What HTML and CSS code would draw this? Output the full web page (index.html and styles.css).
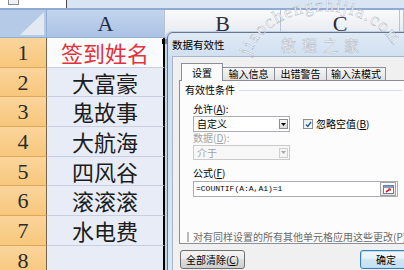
FILE: index.html
```html
<!DOCTYPE html>
<html lang="zh-CN">
<head>
    <meta charset="UTF-8">
    <meta name="viewport" content="width=device-width, initial-scale=1.0">
    <title>数据有效性</title>
    <link rel="stylesheet" href="styles.css">
</head>
<body>

<div class="screen">
    <div class="topbar">
        <div class="namebox"><span class="nb-icon"></span></div>
    </div>

    <div class="sheet">
        <div class="corner"><span class="tri"></span></div>
        <div class="colhead sel">A</div>
        <div class="colhead">B</div>
        <div class="colhead">C</div>
        <div class="colhead"></div>

        <div class="rowhead">1</div><div class="cell a first red">签到姓名</div><div class="cell"></div><div class="cell"></div><div class="cell"></div>
        <div class="rowhead">2</div><div class="cell a">大富豪</div><div class="cell"></div><div class="cell"></div><div class="cell"></div>
        <div class="rowhead">3</div><div class="cell a">鬼故事</div><div class="cell"></div><div class="cell"></div><div class="cell"></div>
        <div class="rowhead">4</div><div class="cell a">大航海</div><div class="cell"></div><div class="cell"></div><div class="cell"></div>
        <div class="rowhead">5</div><div class="cell a">四风谷</div><div class="cell"></div><div class="cell"></div><div class="cell"></div>
        <div class="rowhead">6</div><div class="cell a">滚滚滚</div><div class="cell"></div><div class="cell"></div><div class="cell"></div>
        <div class="rowhead">7</div><div class="cell a">水电费</div><div class="cell"></div><div class="cell"></div><div class="cell"></div>
        <div class="rowhead">8</div><div class="cell a"></div><div class="cell"></div><div class="cell"></div><div class="cell"></div>
    </div>

    <div class="dialog">
        <div class="titlebar">数据有效性</div>
        <div class="client">
            <div class="tabs">
                <div class="tab active">设置</div>
                <div class="tab w1">输入信息</div>
                <div class="tab w2">出错警告</div>
                <div class="tab w3">输入法模式</div>
            </div>
            <div class="panel">
                <div class="group-title">有效性条件</div>
                <div class="fields">
                    <div class="lbl">允许(<u>A</u>):</div>
                    <div class="row">
                        <div class="select">
                            <span class="val">自定义</span>
                            <span class="arrow"><svg width="5" height="3" viewBox="0 0 5 3"><path d="M0 0h5L2.5 3z" fill="#000"/></svg></span>
                        </div>
                        <span class="check on"><svg width="7" height="7" viewBox="0 0 7 7"><path d="M1 3.5l1.8 2L6 1" fill="none" stroke="#2c5aa0" stroke-width="1.4"/></svg></span>
                        <span class="check-lbl">忽略空值(<u>B</u>)</span>
                    </div>
                    <div class="lbl dis">数据(<u>D</u>):</div>
                    <div class="select dis">
                        <span class="val">介于</span>
                        <span class="arrow"><svg width="5" height="3" viewBox="0 0 5 3"><path d="M0 0h5L2.5 3z" fill="#a8a8a8"/></svg></span>
                    </div>
                    <div class="lbl">公式(<u>F</u>)</div>
                    <div class="formula">
                        <span class="ftext">=COUNTIF(A:A,A1)=1</span>
                        <span class="refbtn">
                            <svg width="11" height="9" viewBox="0 0 11 9">
                                <rect x="0.5" y="0.5" width="10" height="8" fill="#fff" stroke="#6d7f99"/>
                                <rect x="1" y="1" width="9" height="2" fill="#7f9cc8"/>
                                <path d="M3 7l4-3" stroke="#d2232a" stroke-width="1.6"/>
                                <path d="M5 3.5h2.8v2.6z" fill="#d2232a"/>
                            </svg>
                        </span>
                    </div>
                </div>
                <div class="apply">
                    <span class="check"></span>
                    <span class="apply-lbl">对有同样设置的所有其他单元格应用这些更改(P)</span>
                </div>
            </div>
            <div class="buttons">
                <div class="btn clear">全部清除(<u>C</u>)</div>
                <div class="btn ok">确定</div>
            </div>
        </div>
    </div>

    <svg class="watermark" width="404" height="60" viewBox="0 0 404 60">
        <defs>
            <path id="arc" d="M250 56 A76 58 0 0 1 398 56"/>
        </defs>
        <text class="wm-latin"><textPath href="#arc">jiaochengzhijia.com</textPath></text>
        <text class="wm-cjk" x="281" y="51">教程之家</text>
    </svg>
</div>

</body>
</html>
```

FILE: styles.css
```css
body {
    margin: 0;
    font-family: "Noto Sans CJK SC", sans-serif;
    background-color: #fff;
}

.screen {
    position: relative;
    width: 404px;
    height: 270px;
    overflow: hidden;
}

/* ---- excel top strip ---- */
.topbar {
    height: 8px;
    background-color: #d9e5f3;
    border-bottom: 2px solid #8faad4;
    display: flex;
}

.namebox {
    width: 66px;
    background-color: #fff;
    border-right: 1px solid #4b4b4b;
}

.nb-icon {
    display: block;
    width: 9px;
    height: 4px;
    margin-left: 8px;
    border: 1px solid #8b8b8b;
    border-top: none;
    background-color: #eef2f7;
}

/* ---- sheet grid ---- */
.sheet {
    display: grid;
    grid-template-columns: 47px 118px 116px 119px 1fr;
    grid-template-rows: 28px repeat(7, 29.7px) 1fr;
    height: 260px;
}

.corner {
    background-color: #b5cae6;
    border-right: 1px solid #93aed0;
    border-bottom: 1px solid #93aed0;
    display: flex;
    align-items: flex-end;
    justify-content: flex-end;
    padding: 0 2px 2px 0;
}

.tri {
    width: 24px;
    height: 23px;
    background-color: #e3e9f1;
    clip-path: polygon(100% 0, 100% 100%, 0 100%);
}

.colhead {
    font-family: "Liberation Serif", serif;
    font-size: 22px;
    line-height: 28px;
    text-align: center;
    color: #2a2f3a;
    background: linear-gradient(#f9fafc, #e4e8ee);
    border-right: 1px solid #b7c3d3;
    border-bottom: 1px solid #93aed0;
}

.colhead.sel {
    background: linear-gradient(#c3d5ed, #aac2e4);
    color: #1e2c44;
}

.rowhead {
    font-family: "Liberation Serif", serif;
    font-size: 22px;
    line-height: 29px;
    text-align: center;
    color: #2b2b2b;
    background: linear-gradient(#fbd59c, #f7c77c);
    border-right: 1px solid #7a6548;
    border-bottom: 1px solid #dfa95c;
}

.cell {
    background-color: #fff;
    border-right: 1px solid #d4dae5;
    border-bottom: 1px solid #d4dae5;
}

.cell.a {
    position: relative;
    font-size: 22px;
    line-height: 28px;
    text-align: center;
    color: #1c1c1c;
    background-color: #e7ecf6;
    border-right: 2px solid #000;
    border-bottom: 1px solid #c8d0df;
}

.cell.first {
    background-color: #fafbfd;
}

.cell.first::after {
    content: "";
    position: absolute;
    right: -4px;
    top: 1px;
    width: 5px;
    height: 5px;
    background-color: #000;
}

.cell.red {
    color: #e2323a;
}

/* ---- dialog ---- */
.dialog {
    position: absolute;
    left: 167px;
    top: 32px;
    width: 250px;
    height: 250px;
    border: 1px solid #67768a;
    border-radius: 6px 6px 0 0;
    background: linear-gradient(#dfeaf6, #cddcee 30px, #dce7f3);
    box-shadow: -1px 0 0 1px rgba(170, 198, 232, 0.7);
    font-size: 10px;
    color: #000;
}

.titlebar {
    height: 23px;
    line-height: 23px;
    padding-left: 4px;
    font-size: 10.5px;
}

.client {
    margin-left: 4px;
    height: 230px;
    background-color: #f0f0f0;
    border-top: 1px solid #a7b6ca;
    border-left: 1px solid #a7b6ca;
    padding: 6px 0 0 6px;
}

.tabs {
    display: flex;
    align-items: flex-end;
    height: 17px;
    margin-left: 2px;
}

.tab {
    height: 12px;
    line-height: 12px;
    text-align: center;
    border: 1px solid #8b8e96;
    border-bottom: none;
    background: linear-gradient(#f6f6f6, #e2e2e2);
    margin-left: -1px;
}

.tab.active {
    position: relative;
    z-index: 1;
    width: 40px;
    height: 17px;
    line-height: 17px;
    margin-bottom: -1px;
    margin-left: 0;
    background: #fcfcfc;
}

.tab.w1 { width: 51px; }
.tab.w2 { width: 51px; }
.tab.w3 { width: 58px; }

.panel {
    width: 220px;
    height: 159px;
    border: 1px solid #8b8e96;
    background-color: #fcfcfc;
    padding: 3px 0 0 5px;
}

.group-title {
    display: flex;
    align-items: center;
    height: 12px;
    line-height: 12px;
}

.group-title::after {
    content: "";
    flex: 1;
    margin: 0 3px 0 4px;
    border-top: 1px solid #d5dfe5;
}

.fields {
    padding-left: 8px;
}

.lbl {
    height: 13px;
    line-height: 13px;
    margin-top: 6px;
}

.lbl.dis {
    margin-top: -1px;
    color: #a2a2a2;
}

.row {
    display: flex;
    align-items: center;
    margin-top: 1px;
}

.select {
    width: 92px;
    height: 14px;
    border: 1px solid #abadb3;
    background-color: #fff;
    display: flex;
    align-items: center;
    padding-left: 3px;
}

.select .val {
    flex: 1;
    line-height: 14px;
}

.select .arrow {
    width: 7px;
    height: 8px;
    margin-right: 1px;
    border: 1px solid #8d8d8d;
    background: linear-gradient(#fafafa, #dcdcdc);
    display: flex;
    align-items: center;
    justify-content: center;
}

.select.dis {
    height: 13px;
    margin-top: 1px;
    color: #a2a2a2;
    border-color: #cacaca;
    background-color: #f7f7f7;
}

.select.dis .arrow {
    border-color: #cfcfcf;
    background: #f4f4f4;
}

.check {
    width: 8px;
    height: 8px;
    border: 1px solid #8e8f8f;
    background: linear-gradient(135deg, #e6e6e6, #fff);
    display: flex;
    align-items: center;
    justify-content: center;
}

.check.on {
    margin-left: 13px;
}

.check-lbl {
    margin-left: 3px;
    line-height: 14px;
}

.formula {
    display: flex;
    align-items: center;
    width: 203px;
    height: 14px;
    border: 1px solid #abadb3;
    background-color: #fff;
    margin-top: 2px;
}

.ftext {
    flex: 1;
    padding-left: 2px;
    font-family: "Liberation Mono", monospace;
    font-size: 8px;
    line-height: 14px;
}

.refbtn {
    width: 14px;
    height: 12px;
    margin-right: 1px;
    border: 1px solid #a3a3a3;
    background: linear-gradient(#fbfbfb, #e2e2e2);
    display: flex;
    align-items: center;
    justify-content: center;
}

.apply {
    display: flex;
    align-items: center;
    height: 12px;
    margin: 34px 0 0 2px;
}

.apply .check {
    border-color: #b9b9b9;
    background: #f4f4f4;
}

.apply-lbl {
    margin-left: 4px;
    white-space: nowrap;
    color: #6b6b6b;
    line-height: 12px;
}

.buttons {
    display: flex;
    margin-top: 6px;
}

.btn {
    height: 17px;
    line-height: 17px;
    text-align: center;
    border: 1px solid #707070;
    border-radius: 3px;
    background: linear-gradient(#f3f3f3, #ebebeb 50%, #dddddd 50%, #cfcfcf);
}

.btn.clear {
    width: 63px;
    margin-left: 1px;
}

.btn.ok {
    width: 50px;
    margin-left: 115px;
    border-color: #3c7fb1;
    box-shadow: inset 0 0 0 1px #aee0fb;
    background: linear-gradient(#f2f8fc, #e3f0f9 50%, #cfe6f5 50%, #c4e0f3);
}

/* ---- watermark ---- */
.watermark {
    position: absolute;
    left: 0;
    top: 0;
    pointer-events: none;
}

.wm-latin {
    font-family: "Liberation Serif", serif;
    font-size: 18px;
    letter-spacing: 1.5px;
    fill: rgba(255, 255, 255, 0.92);
    stroke: rgba(100, 110, 125, 0.45);
    stroke-width: 0.5px;
}

.wm-cjk {
    font-size: 15px;
    letter-spacing: 6px;
    fill: rgba(255, 255, 255, 0.95);
    stroke: rgba(100, 110, 125, 0.45);
    stroke-width: 0.5px;
}
```
